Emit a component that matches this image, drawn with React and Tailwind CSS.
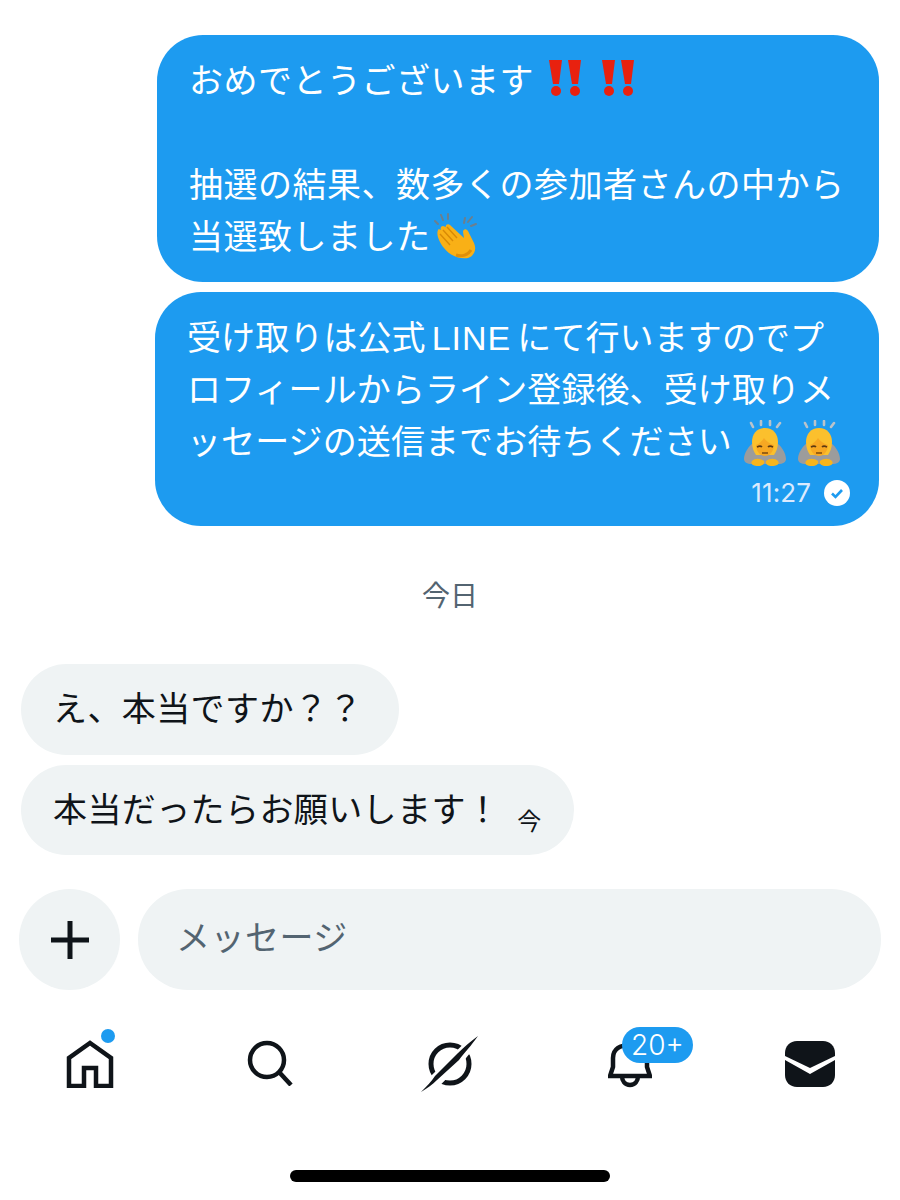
const BangBang = ({ className }) => (
    <svg viewBox="0 0 34 36" className={className}>
        <path d="M1 0h13l-3 24H5z" fill="#e8210f" />
        <circle cx="8" cy="31" r="5" fill="#e8210f" />
        <path d="M20 0h13l-3 24h-6z" fill="#e8210f" />
        <circle cx="27" cy="31" r="5" fill="#e8210f" />
    </svg>
);

const Clap = () => (
    <svg viewBox="0 0 44 46" className="inline-block ml-[3px] w-[44px] h-[46px] align-[-10px]">
        <g stroke="#6b7f8e" strokeWidth="2" strokeLinecap="round">
            <path d="M1 8l3 3M7 2l2 5M14 1v5M31 5l-1 5M38 4l-4 5M42 11l-5 2" />
        </g>
        <path d="M4 17c-2 4 1 12 6 18 6 8 15 11 24 10 6-2 9-8 6-15l-6-12c-2-3-5-2-5 1l1 6L16 12c-2-2-5 0-4 2l-3-1c-2 0-3 2-2 4-1-1-3-1-3 0z" fill="#f9b016" />
        <path d="M9 17l10 11M13 14l10 11M6 21l10 11" stroke="#d98a06" strokeWidth="1.4" fill="none" />
        <path d="M22 42c6 2 12 0 15-5" stroke="#e08f0a" strokeWidth="3" fill="none" />
    </svg>
);

const Bow = ({ className }) => (
    <svg viewBox="0 0 42 46" className={className}>
        <g stroke="#b9c3cb" strokeWidth="2.6" strokeLinecap="round">
            <path d="M7 3l2 4M17 1v4M26 1v4M36 3l-3 4" />
        </g>
        <path d="M11 22C5 25 0 33 0 39c0 3 3 5 8 5h26c5 0 8-2 8-5 0-6-5-14-11-17l-2 11H13z" fill="#9c9c9c" />
        <path d="M21 8c8 0 13 6 13 14 0 6-2 10-4 13H12c-2-3-4-7-4-13 0-8 5-14 13-14z" fill="#fbc02d" />
        <path d="M12 25c3-1 6-4 8-7 2 3 6 6 10 7 0 6-4 11-9 11s-9-5-9-11z" fill="#f7a823" />
        <path d="M13 27c2-1 4-1 5 0M24 27c1-1 3-1 5 0" stroke="#5d3a12" strokeWidth="1.6" fill="none" />
        <path d="M18 33h6" stroke="#7a4a12" strokeWidth="1.5" />
        <path d="M8 41c3-3 8-3 12 0 1 3-2 5-6 5-5 0-8-2-6-5zM34 41c-3-3-8-3-12 0-1 3 2 5 6 5 5 0 8-2 6-5z" fill="#f7b51c" />
    </svg>
);

const NavBar = () => (
    <div className="grid grid-cols-5 mt-[28px] h-[100px] text-[#0f1419]">
        <div className="flex justify-center pt-[22px]">
            <div className="relative w-[48px] h-[48px]">
                <svg viewBox="0 0 48 48" className="w-[48px] h-[48px]" fill="none" stroke="#0f1419" strokeWidth="4.5">
                    <path d="M3 46V18L24 3l21 15v28H30V28H18v18z" strokeLinejoin="miter" />
                </svg>
                <span className="absolute top-[-11px] right-[-1px] w-[14px] h-[14px] rounded-full bg-[#1d9bf0]" />
            </div>
        </div>
        <div className="flex justify-center pt-[22px]">
            <svg viewBox="0 0 46 46" className="w-[46px] h-[46px]" fill="none" stroke="#0f1419" strokeWidth="4.5">
                <circle cx="20" cy="20" r="17" />
                <path d="M32 32l12 13" />
            </svg>
        </div>
        <div className="flex justify-center pt-[18px]">
            <svg viewBox="0 0 58 56" className="w-[58px] h-[56px]">
                <circle cx="29" cy="28" r="19" fill="none" stroke="#0f1419" strokeWidth="5" />
                <path d="M57 0L0 56l10-4 26-26z" fill="#fff" stroke="#fff" strokeWidth="9" />
                <path d="M57 0C50 10 44 16 38 24L16 44C11 49 6 52 0 56c6-6 10-10 14-16L36 18c7-7 14-13 21-18z" fill="#0f1419" />
            </svg>
        </div>
        <div className="flex justify-center pt-[22px]">
            <div className="relative w-[44px] h-[48px]">
                <svg viewBox="0 0 44 48" className="w-[44px] h-[48px]" fill="none" stroke="#0f1419" strokeWidth="4.5">
                    <path d="M2 36h40l-3-9V18C39 9 32 5 22 5S5 9 5 18v9z" />
                    <path d="M14 36c0 5 3 9 8 9s8-4 8-9" />
                </svg>
                <span className="absolute top-[-13px] left-[14px] w-[71px] h-[36px] rounded-[18px] bg-[#1d9bf0] text-white text-[28px] leading-[36px] text-center font-['Inter',sans-serif] font-light">20+</span>
            </div>
        </div>
        <div className="flex justify-center pt-[23px]">
            <svg viewBox="0 0 50 46" className="w-[50px] h-[46px]">
                <path d="M0 12C0 5 5 0 12 0h26c7 0 12 5 12 12v3L25 27 0 15z" fill="#0f1419" />
                <path d="M0 19l25 14 25-14v15c0 7-5 12-12 12H12C5 46 0 41 0 34z" fill="#0f1419" />
            </svg>
        </div>
    </div>
);

const App = () => {
    return (
        <div className="w-[900px] h-[1200px] bg-white pt-[35px] overflow-hidden font-['Liberation_Sans','Noto_Sans_CJK_JP',sans-serif] text-[34px] leading-[52px]">
            <div className="flex flex-col items-end pr-[21px] gap-[10px]">
                <div className="w-[722px] h-[247px] bg-[#1d9bf0] rounded-[46px] pl-[32px] pt-[20px] text-white whitespace-nowrap tracking-[0.5px]">
                    <div className="h-[48px] mb-[56px]">
                        おめでとうございます
                        <BangBang className="inline-block ml-[14px] w-[34px] h-[36px] align-[-3px]" />
                        <BangBang className="inline-block ml-[19px] w-[34px] h-[36px] align-[-3px]" />
                    </div>
                    抽選の結果、数多くの参加者さんの中から
                    <br />
                    当選致しました<Clap />
                </div>
                <div className="w-[724px] h-[234px] bg-[#1d9bf0] rounded-[46px] pl-[32px] pt-[20px] text-white whitespace-nowrap tracking-[0.1px]">
                    受け取りは公式<span className="mx-[6px] tracking-[1px]">LINE</span>にて行いますのでプ
                    <br />
                    ロフィールからライン登録後、受け取りメ
                    <br />
                    ッセージの送信までお待ちください
                    <Bow className="inline-block ml-[12px] w-[42px] h-[46px] align-[-12px]" />
                    <Bow className="inline-block ml-[12px] w-[42px] h-[46px] align-[-12px]" />
                    <div className="flex items-center justify-end gap-[13px] pr-[29px] mt-[2px] h-[46px]">
                        <span className="text-[26px] text-[#dbeafe] font-['Inter',sans-serif]">11:27</span>
                        <svg viewBox="0 0 26 26" className="w-[26px] h-[26px]">
                            <circle cx="13" cy="13" r="13" fill="#fff" />
                            <path d="M8 13.5l3.5 3.5L18 10" fill="none" stroke="#1d9bf0" strokeWidth="2.6" />
                        </svg>
                    </div>
                </div>
            </div>

            <div className="mt-[50px] h-[42px] text-center text-[28px] leading-[42px] text-[#536471]">今日</div>

            <div className="mt-[46px] flex flex-col items-start pl-[21px] gap-[10px] text-[#0f1419] tracking-[0.4px]">
                <div className="w-[378px] h-[91px] rounded-[46px] bg-[#eff3f4] pl-[32px] leading-[90px] whitespace-nowrap">え、本当ですか？？</div>
                <div className="w-[553px] h-[90px] rounded-[45px] bg-[#eff3f4] pl-[32px] flex whitespace-nowrap">
                    <span className="leading-[90px]">本当だったらお願いします！</span>
                    <span className="ml-[17px] text-[24px] leading-[113px]">今</span>
                </div>
            </div>

            <div className="mt-[34px] flex items-center pl-[19px] pr-[19px] gap-[18px]">
                <div className="w-[101px] h-[101px] rounded-full bg-[#eff3f4] flex items-center justify-center">
                    <svg viewBox="0 0 38 38" className="w-[38px] h-[38px]" stroke="#0f1419" strokeWidth="5">
                        <path d="M19 0v38M0 19h38" />
                    </svg>
                </div>
                <div className="flex-1 h-[101px] rounded-[50px] bg-[#eff3f4] pl-[38px] text-[#536471] tracking-[0.5px] leading-[98px]">メッセージ</div>
            </div>

            <NavBar />

            <div className="mt-[52px] mx-auto w-[320px] h-[12px] rounded-full bg-black" />
        </div>
    );
};

export default App;
